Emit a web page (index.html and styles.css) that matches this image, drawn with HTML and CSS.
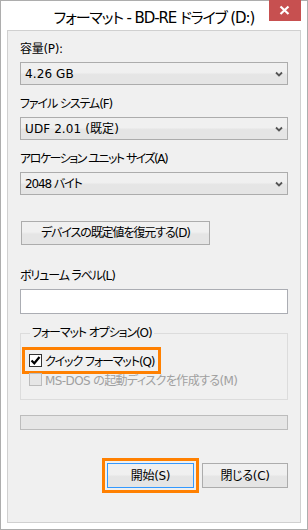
FILE: index.html
```html
<!DOCTYPE html>
<html lang="ja">
<head>
<meta charset="utf-8">
<link rel="stylesheet" href="styles.css">
</head>
<body>
<div class="window">
  <div class="titlebar">
    <div class="spacer"></div>
    <div class="title">フォーマット - BD-RE ドライブ (D:)</div>
    <div class="capbtn"><svg width="32" height="21" viewBox="0 0 32 21"><path d="M11.5 6.5 L19.5 14 M19.5 6.5 L11.5 14" stroke="#ffffff" stroke-width="2.2" fill="none"/></svg></div>
  </div>
  <div class="client">
    <div class="field">
      <div class="label">容量(P):</div>
      <div class="combo"><span class="latin">4.26 GB</span><svg class="chev" width="8" height="6" viewBox="0 0 8 6"><path d="M1 1.5 L4 4.5 L7 1.5" stroke="#555" stroke-width="1.8" fill="none"/></svg></div>
    </div>
    <div class="field">
      <div class="label kana">ファイル システム(F)</div>
      <div class="combo"><span class="latin">UDF 2.01 (既定)</span><svg class="chev" width="8" height="6" viewBox="0 0 8 6"><path d="M1 1.5 L4 4.5 L7 1.5" stroke="#555" stroke-width="1.8" fill="none"/></svg></div>
    </div>
    <div class="field">
      <div class="label kana2">アロケーション ユニット サイズ(A)</div>
      <div class="combo"><span class="kana">2048 バイト</span><svg class="chev" width="8" height="6" viewBox="0 0 8 6"><path d="M1 1.5 L4 4.5 L7 1.5" stroke="#555" stroke-width="1.8" fill="none"/></svg></div>
    </div>
    <div class="btn restore kana">デバイスの既定値を復元する(D)</div>
    <div class="field volume">
      <div class="label kana">ボリューム ラベル(L)</div>
      <div class="textbox"></div>
    </div>
    <fieldset class="group">
      <legend class="kana">フォーマット オプション(O)</legend>
      <div class="check highlight">
        <span class="box"><svg width="11" height="11" viewBox="0 0 11 11"><path d="M1.5 5.5 L4.3 8.3 L9.5 2" stroke="#000" stroke-width="2.2" fill="none"/></svg></span>
        <span class="kana">クイック フォーマット(Q)</span>
      </div>
      <div class="check disabled">
        <span class="box"></span>
        <span class="mixed">MS-DOS の起動ディスクを作成する(M)</span>
      </div>
    </fieldset>
    <div class="progress"></div>
    <div class="actions">
      <div class="btn default">開始(S)</div>
      <div class="btn">閉じる(C)</div>
    </div>
  </div>
</div>
</body>
</html>
```
FILE: styles.css
```css
* { box-sizing: border-box; }
html, body { margin: 0; padding: 0; background: #fff; }
body {
  font-family: "DejaVu Sans", "Noto Sans CJK JP", sans-serif;
  font-size: 12px;
  color: #000;
  font-feature-settings: "palt";
  letter-spacing: -0.3px;
}
.kana { letter-spacing: -1.1px; }
.kana2 { letter-spacing: -1.5px; }
.latin { letter-spacing: 0.1px; }
.mixed { letter-spacing: -0.6px; }
.window {
  width: 308px;
  height: 530px;
  border: 1px solid #adadad;
  background: #fff;
  padding: 0 6px 6px 6px;
  display: flex;
  flex-direction: column;
}
.titlebar {
  height: 29px;
  flex: 0 0 29px;
  display: grid;
  grid-template-columns: 32px 1fr 32px;
  align-items: start;
}
.title {
  font-size: 15px;
  line-height: 20px;
  padding-top: 7px;
  text-align: center;
  white-space: nowrap;
  letter-spacing: -1.1px;
  color: #000;
}
.capbtn {
  width: 32px;
  height: 21px;
  margin-top: -1px;
  border-style: solid;
  border-color: #c75050;
  border-width: 11px 16px 10px 16px;
  line-height: 0;
}
.capbtn svg { display: block; margin: -11px 0 0 -16px; }
.client {
  height: 493px;
  flex: 0 0 493px;
  border: 1px solid #d0d0d0;
  background: #f0f0f0;
  padding: 9px 12px 0 12px;
  display: flex;
  flex-direction: column;
}
.field { display: flex; flex-direction: column; gap: 4px; margin-bottom: 10px; }
.label { line-height: 18px; height: 18px; white-space: nowrap; }
.combo {
  height: 23px;
  border: 1px solid #acacac;
  background: linear-gradient(#f0f0f0, #f0f0f0 45%, #e5e5e5 55%, #e5e5e5);
  display: flex;
  align-items: center;
  justify-content: space-between;
  padding: 0 4px 0 4px;
  line-height: 18px;
  white-space: nowrap;
}
.btn {
  height: 24px;
  border: 1px solid #acacac;
  background: linear-gradient(#f0f0f0, #f0f0f0 45%, #e5e5e5 55%, #e5e5e5);
  display: flex;
  align-items: center;
  justify-content: center;
  line-height: 18px;
  white-space: nowrap;
}
.restore {
  width: 189px;
  margin-left: 1px;
  margin-top: 16px;
}
.volume { margin-top: 22px; margin-bottom: 0; }
.textbox {
  height: 25px;
  background: #fff;
  border: 1px solid #abadb3;
}
.group {
  margin: 10px 0 0 0;
  border: 1px solid #dcdcdc;
  padding: 9px 5px 10px 5px;
  display: flex;
  flex-direction: column;
  align-items: flex-start;
  min-width: 0;
}
.group legend {
  padding: 0 2px;
  margin-left: 4px;
  line-height: 18px;
}
.check {
  height: 19px;
  display: flex;
  align-items: center;
  gap: 3px;
  padding: 0 3px;
  white-space: nowrap;
}
.check .box {
  width: 13px;
  height: 13px;
  border: 1px solid #333;
  background: #fff;
  display: flex;
  align-items: center;
  justify-content: center;
}
.highlight { outline: 3px solid #ff8000; outline-offset: 1px; }
.disabled { color: #a0a0a0; }
.disabled .box { border-color: #bcbcbc; background: #e6e6e6; }
.progress {
  margin-top: 15px;
  height: 15px;
  border: 1px solid #bcbcbc;
  background: #e6e6e6;
}
.actions {
  margin-top: 33px;
  display: flex;
  justify-content: flex-end;
  gap: 8px;
}
.actions .btn { height: 25px; width: 86px; }
.actions .default {
  width: 87px;
  border-color: #3399ff;
  outline: 3px solid #ff8000;
  outline-offset: 2px;
}
```
